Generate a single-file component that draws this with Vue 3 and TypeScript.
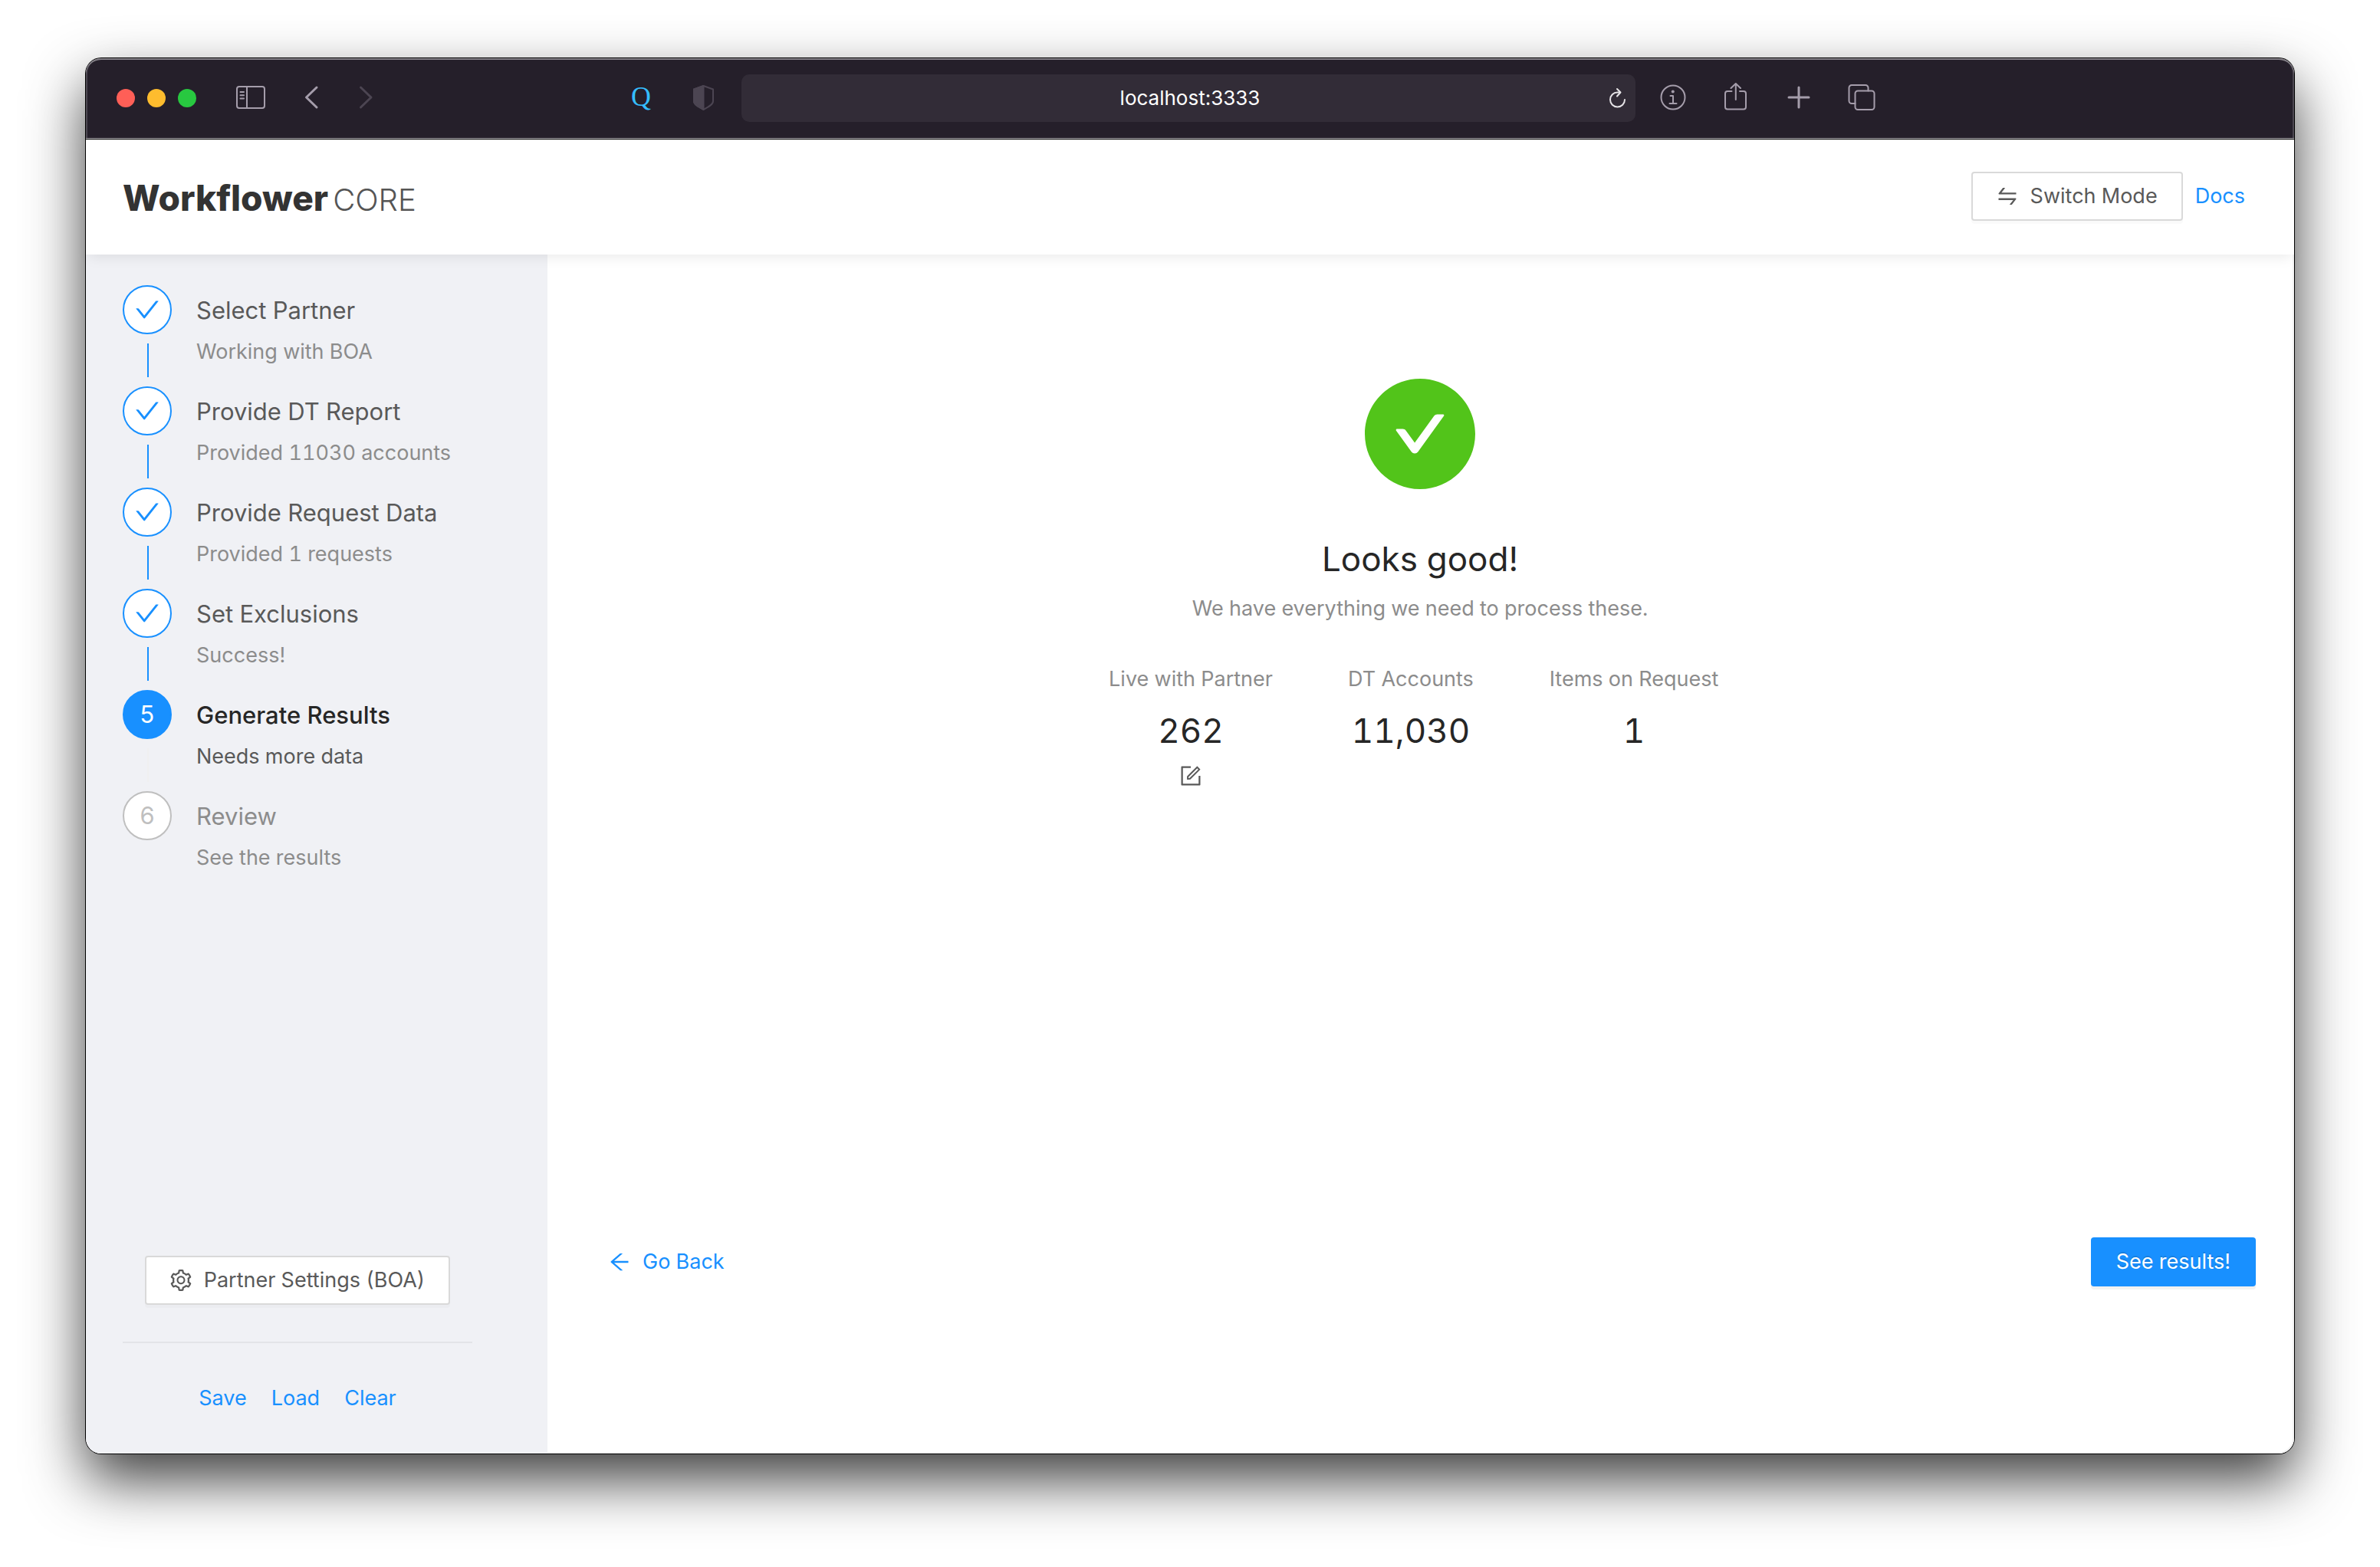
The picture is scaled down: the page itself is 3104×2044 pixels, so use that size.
<script setup lang="ts">
type StepStatus = 'done' | 'active' | 'waiting'

interface Step {
  title: string
  description: string
  status: StepStatus
}

interface Stat {
  label: string
  value: string
  editable: boolean
}

const steps: Step[] = [
  { title: 'Select Partner', description: 'Working with BOA', status: 'done' },
  { title: 'Provide DT Report', description: 'Provided 11030 accounts', status: 'done' },
  { title: 'Provide Request Data', description: 'Provided 1 requests', status: 'done' },
  { title: 'Set Exclusions', description: 'Success!', status: 'done' },
  { title: 'Generate Results', description: 'Needs more data', status: 'active' },
  { title: 'Review', description: 'See the results', status: 'waiting' },
]

const stats: Stat[] = [
  { label: 'Live with Partner', value: '262', editable: true },
  { label: 'DT Accounts', value: '11,030', editable: false },
  { label: 'Items on Request', value: '1', editable: false },
]

const sessionActions: string[] = ['Save', 'Load', 'Clear']
</script>

<template>
  <div class="desktop">
    <div class="window">
      <div class="toolbar">
        <div class="toolbar-left">
          <div class="lights">
            <button class="light close" aria-label="Close"></button>
            <button class="light minimize" aria-label="Minimize"></button>
            <button class="light zoom" aria-label="Zoom"></button>
          </div>
          <button class="tool sidebar-toggle" aria-label="Show sidebar">
            <svg viewBox="0 0 40 40">
              <rect x="2" y="5" width="36" height="28" rx="3" />
              <path d="M15 5v28" />
              <path class="thin" d="M6.5 12H11M6.5 16.300H11M6.5 20.600H11" />
            </svg>
          </button>
          <button class="tool back" aria-label="Back">
            <svg viewBox="0 0 40 40"><path class="bold" d="M27 6L13.5 19 27 32" /></svg>
          </button>
          <button class="tool forward" aria-label="Forward" disabled>
            <svg viewBox="0 0 40 40"><path class="bold" d="M12.5 6L26 19 12.5 32" /></svg>
          </button>
          <button class="tool extension" aria-label="Extension">Q</button>
          <button class="tool shield" aria-label="Privacy report">
            <svg viewBox="0 0 40 40">
              <path d="M19.5 4L32 8.500v15.500c0 4.500-7 8-12.5 11C14 32 7 28.500 7 24V8.500z" />
              <path class="solid" d="M19.5 4v31C14 32 7 28.500 7 24V8.500z" />
            </svg>
          </button>
        </div>
        <div class="address">
          <input type="text" value="localhost:3333" aria-label="Address" />
          <button class="reload" aria-label="Reload">
            <svg viewBox="0 0 24 30">
              <path d="M22 17a9.500 9.500 0 1 1-9.500-9.500H16" />
              <path d="M12 3l4.500 4.500L12 12.500" />
            </svg>
          </button>
        </div>
        <div class="toolbar-right">
          <button class="tool" aria-label="Page info">
            <svg viewBox="0 0 40 40">
              <circle cx="20" cy="19" r="15.500" />
              <circle class="dot" cx="19.800" cy="11.500" r="2" />
              <path d="M16.500 17H20v9.800M15.500 27h9" />
            </svg>
          </button>
          <button class="tool" aria-label="Share">
            <svg viewBox="0 0 40 40">
              <path d="M14.500 11H9a3 3 0 0 0-3 3v17.500a3 3 0 0 0 3 3h21a3 3 0 0 0 3-3V14a3 3 0 0 0-3-3H25" />
              <path d="M19.800 22V1M13.500 7l6.300-6L26 7" />
            </svg>
          </button>
          <button class="tool" aria-label="New tab">
            <svg viewBox="0 0 40 40"><path class="bold" d="M20 6v26M7 19h26" /></svg>
          </button>
          <button class="tool" aria-label="Tab overview">
            <svg viewBox="0 0 40 40">
              <rect x="11.500" y="10.500" width="25" height="24.500" rx="3.500" />
              <path d="M11.500 27H7a3.500 3.500 0 0 1-3.500-3.500V6.500A3.500 3.500 0 0 1 7 3h18a3.500 3.500 0 0 1 3.500 3.500v4" />
            </svg>
          </button>
        </div>
      </div>

      <header class="header">
        <h1 class="logo">Workflower<span>CORE</span></h1>
        <nav class="header-actions">
          <button class="btn">
            <svg class="icon" viewBox="64 64 896 896" aria-hidden="true"><path d="M847.9 592H152c-4.400 0-8 3.600-8 8v60c0 4.400 3.600 8 8 8h605.200L612.900 851c-4.100 5.200-.4 13 6.300 13h72.500c4.900 0 9.500-2.200 12.600-6.100l168.800-214.100c16.500-21 1.600-51.800-25.200-51.800zM872 356H266.800l144.300-183c4.100-5.200.4-13-6.300-13h-72.500c-4.900 0-9.500 2.200-12.600 6.100L150.900 380.200c-16.500 21-1.600 51.800 25.100 51.800h696c4.400 0 8-3.600 8-8v-60c0-4.400-3.600-8-8-8z" /></svg>
            Switch Mode
          </button>
          <a class="link" href="#docs">Docs</a>
        </nav>
      </header>

      <div class="body">
        <aside class="sidebar">
          <ol class="steps">
            <li v-for="(step, index) in steps" :key="step.title" class="step" :class="step.status">
              <div class="rail">
                <span class="badge">
                  <svg v-if="step.status === 'done'" viewBox="64 64 896 896" aria-hidden="true"><path d="M912 190h-69.900c-9.800 0-19.100 4.500-25.100 12.200L404.700 724.500 207 474a32 32 0 00-25.100-12.200H112c-6.700 0-10.400 7.700-6.300 12.900l273.900 347c12.800 16.200 37.400 16.200 50.300 0l488.400-618.900c4.100-5.100.4-12.800-6.300-12.800z" /></svg>
                  <template v-else>{{ index + 1 }}</template>
                </span>
                <span v-if="index < steps.length - 1" class="tail"></span>
              </div>
              <div class="step-text">
                <div class="step-title">{{ step.title }}</div>
                <div class="step-description">{{ step.description }}</div>
              </div>
            </li>
          </ol>

          <div class="sidebar-footer">
            <button class="btn">
              <svg class="icon" viewBox="64 64 896 896" aria-hidden="true"><path d="M924.800 625.700l-65.500-56c3.100-19 4.700-38.400 4.700-57.800s-1.600-38.800-4.700-57.800l65.500-56a32.030 32.030 0 009.300-35.200l-.9-2.600a443.740 443.740 0 00-79.700-137.900l-1.800-2.100a32.120 32.120 0 00-35.100-9.500l-81.300 28.900c-30-24.600-63.500-44-99.700-57.600l-15.700-85a32.050 32.050 0 00-25.800-25.700l-2.700-.5c-52.100-9.400-106.900-9.400-159 0l-2.700.5a32.050 32.050 0 00-25.800 25.700l-15.800 85.400a351.860 351.860 0 00-99 57.400l-81.900-29.100a32 32 0 00-35.100 9.500l-1.800 2.100a446.020 446.020 0 00-79.700 137.900l-.9 2.600c-4.500 12.500-.8 26.500 9.300 35.200l66.300 56.600c-3.100 18.800-4.600 38-4.600 57.100 0 19.200 1.500 38.400 4.600 57.100L99 625.500a32.030 32.030 0 00-9.300 35.200l.9 2.600c18.100 50.400 44.900 96.900 79.700 137.900l1.800 2.100a32.120 32.120 0 0035.100 9.500l81.900-29.100c29.800 24.500 63.100 43.900 99 57.400l15.800 85.400a32.050 32.050 0 0025.800 25.700l2.700.5a449.400 449.400 0 00159 0l2.700-.5a32.050 32.050 0 0025.800-25.700l15.700-85a350 350 0 0099.700-57.600l81.300 28.900a32 32 0 0035.100-9.500l1.800-2.100c34.800-41.100 61.600-87.500 79.700-137.900l.9-2.600c4.500-12.300.8-26.300-9.300-35zM788.300 465.900c2.500 15.100 3.800 30.600 3.800 46.100s-1.300 31-3.800 46.100l-6.600 40.100 74.700 63.900a370.030 370.030 0 01-42.600 73.600L721 702.800l-31.400 25.800c-23.900 19.600-50.500 35-79.300 45.800l-38.100 14.300-17.900 97a377.500 377.500 0 01-85 0l-17.900-97.200-37.800-14.500c-28.500-10.800-55-26.200-78.700-45.700l-31.400-25.900-93.400 33.200c-17-22.900-31.200-47.600-42.600-73.600l75.500-64.500-6.500-40c-2.400-14.900-3.700-30.300-3.700-45.500 0-15.300 1.200-30.600 3.700-45.500l6.500-40-75.500-64.500c11.300-26.100 25.600-50.700 42.600-73.600l93.400 33.200 31.400-25.900c23.700-19.500 50.200-34.900 78.700-45.700l37.900-14.300 17.900-97.200c28.100-3.200 56.800-3.200 85 0l17.900 97 38.100 14.300c28.700 10.800 55.400 26.200 79.300 45.800l31.400 25.800 92.800-32.900c17 22.900 31.200 47.600 42.600 73.600L781.800 426l6.500 39.900zM512 326c-97.200 0-176 78.800-176 176s78.800 176 176 176 176-78.800 176-176-78.800-176-176-176zm79.200 255.200A111.600 111.600 0 01512 614c-29.900 0-58-11.700-79.200-32.800A111.600 111.600 0 01400 502c0-29.900 11.700-58 32.800-79.200C454 401.600 482.100 390 512 390c29.900 0 58 11.600 79.200 32.800A111.600 111.600 0 01624 502c0 29.900-11.700 58-32.800 79.200z" /></svg>
              Partner Settings (BOA)
            </button>
            <hr class="divider" />
            <div class="session">
              <a v-for="action in sessionActions" :key="action" class="link" href="#">{{ action }}</a>
            </div>
          </div>
        </aside>

        <main class="main">
          <section class="result">
            <svg class="result-icon" viewBox="64 64 896 896" aria-hidden="true"><path d="M512 64C264.600 64 64 264.600 64 512s200.600 448 448 448 448-200.600 448-448S759.400 64 512 64zm193.500 301.700l-210.600 292a31.800 31.800 0 01-51.700 0L318.500 484.900c-3.800-5.300 0-12.700 6.500-12.700h46.900c10.200 0 19.900 4.900 25.900 13.300l71.200 98.800 157.200-218c6-8.300 15.600-13.300 25.900-13.300H699c6.500 0 10.300 7.400 6.500 12.700z" /></svg>
            <h2>Looks good!</h2>
            <p class="subtitle">We have everything we need to process these.</p>
            <div class="stats">
              <div v-for="stat in stats" :key="stat.label" class="stat">
                <div class="stat-label">{{ stat.label }}</div>
                <div class="stat-value">{{ stat.value }}</div>
                <button v-if="stat.editable" class="edit" :aria-label="`Edit ${stat.label}`">
                  <svg class="icon" viewBox="64 64 896 896"><path d="M904 512h-56c-4.400 0-8 3.600-8 8v320H184V184h320c4.400 0 8-3.600 8-8v-56c0-4.400-3.600-8-8-8H144c-17.700 0-32 14.300-32 32v736c0 17.700 14.300 32 32 32h736c17.700 0 32-14.300 32-32V520c0-4.400-3.600-8-8-8z" /><path d="M355.900 534.900L354 653.800c-.1 8.900 7.100 16.200 16 16.200h.4l118-2.900c2-.1 4-.9 5.400-2.300l415.900-415c3.100-3.100 3.100-8.200 0-11.300L785.400 114.300c-1.600-1.600-3.600-2.300-5.700-2.300s-4.100.8-5.700 2.300l-415.800 415a8.300 8.300 0 00-2.300 5.600zm63.500 23.600L779.700 199l45.200 45.100-360.500 359.700-45.700 1.100.7-46.400z" /></svg>
                </button>
              </div>
            </div>
          </section>
          <div class="actions">
            <button class="go-back">
              <svg class="icon" viewBox="64 64 896 896" aria-hidden="true"><path d="M872 474H286.900l350.200-304c5.600-4.900 2.200-14-5.200-14h-88.500c-3.900 0-7.600 1.400-10.500 3.900L155 487.800a31.960 31.960 0 000 48.300L535.100 866c1.500 1.300 3.300 2 5.200 2h91.500c7.400 0 10.800-9.200 5.200-14L286.900 550H872c4.400 0 8-3.600 8-8v-60c0-4.400-3.600-8-8-8z" /></svg>
              Go Back
            </button>
            <button class="primary">See results!</button>
          </div>
        </main>
      </div>
    </div>
  </div>
</template>

<style>
body {
  margin: 0;
  background: #fff;
}
</style>

<style scoped>
* {
  box-sizing: border-box;
}

button,
input {
  margin: 0;
  padding: 0;
  border: 0;
  background: none;
  font: inherit;
  color: inherit;
}

.desktop {
  display: flex;
  flex-direction: column;
  min-height: 100vh;
  padding: 76px 112px 148px;
  overflow: hidden;
  font-family: Inter, 'Liberation Sans', sans-serif;
  font-size: 27px;
  line-height: 44px;
  font-variant-numeric: tabular-nums;
  color: #262626;
}

.window {
  display: flex;
  flex: 1;
  flex-direction: column;
  border-radius: 20px;
  background: #fff;
  box-shadow: 0 0 0 1px #000, 0 34px 76px rgba(0, 0, 0, 0.76);
}

/* Browser toolbar */
.toolbar {
  display: grid;
  grid-template-columns: minmax(0, 855fr) minmax(0, 1166fr) minmax(0, 859fr);
  align-items: center;
  height: 106px;
  padding-bottom: 1px;
  border-bottom: 1px solid #000;
  border-radius: 20px 20px 0 0;
  background: #251f2a;
  box-shadow: inset 0 -1px #b0adb2, inset 0 2px #858188, inset 2px 0 #4d4852, inset -2px 0 #4d4852;
}

.toolbar-left,
.toolbar-right {
  display: flex;
  align-items: center;
}

.toolbar-left {
  padding: 0 29px 0 40px;
}

.toolbar-right {
  gap: 42px;
  padding-left: 29px;
}

.lights {
  display: flex;
  gap: 16px;
}

.light {
  width: 24px;
  height: 24px;
  border-radius: 50%;
}

.close {
  background: #ff5f57;
}

.minimize {
  background: #febc2e;
}

.zoom {
  background: #28c840;
}

.tool {
  width: 40px;
  height: 40px;
  color: #a59dab;
}

.tool svg,
.reload svg {
  display: block;
  width: 100%;
  height: 100%;
  fill: none;
  stroke: currentColor;
  stroke-width: 2;
  stroke-linecap: round;
  stroke-linejoin: round;
}

.tool svg .bold {
  stroke-width: 3;
}

.tool svg .thin {
  stroke-width: 2;
}

.tool svg .solid,
.tool svg .dot {
  fill: currentColor;
}

.tool svg .dot {
  stroke: none;
}

.sidebar-toggle {
  margin-left: 51px;
}

.back {
  margin-left: 39px;
}

.forward {
  margin-left: 32px;
  color: #4c4552;
}

.extension {
  margin-left: auto;
  font-family: 'Liberation Serif', serif;
  font-size: 36px;
  line-height: 36px;
  padding-bottom: 4px;
  color: #35bdff;
}

.shield {
  margin-left: 42px;
  color: #4c4552;
}

.address {
  display: grid;
  grid-template-columns: 40px 1fr 24px;
  align-items: center;
  height: 62px;
  padding-right: 12px;
  border-radius: 10px;
  background: #322c37;
}

.address input {
  grid-column: 2;
  width: 100%;
  height: 44px;
  font-size: 26px;
  font-variant-numeric: normal;
  text-align: center;
  color: #fff;
}

.reload {
  width: 24px;
  height: 30px;
  color: #e6e4e7;
}

/* Application header */
.header {
  display: flex;
  position: relative;
  align-items: center;
  justify-content: space-between;
  height: 150px;
  padding: 0 64px 2px 48px;
  background: #fff;
  box-shadow: 0 8px 16px -4px rgba(0, 0, 0, 0.08);
}

.logo {
  display: flex;
  align-items: baseline;
  gap: 6px;
  margin: 0;
  padding-top: 6px;
  font-size: 46px;
  font-weight: 800;
  line-height: 64px;
  color: #333;
}

.logo span {
  font-size: 40px;
  font-weight: 300;
  color: #555;
}

.header-actions {
  display: flex;
  align-items: center;
  gap: 16px;
}

.btn {
  display: flex;
  align-items: center;
  justify-content: center;
  gap: 16px;
  height: 64px;
  padding: 0 31px;
  border: 2px solid #d9d9d9;
  border-radius: 4px;
  background: #fff;
  box-shadow: 0 4px rgba(0, 0, 0, 0.02);
  white-space: nowrap;
  color: #595959;
}

.icon {
  display: block;
  flex: none;
  width: 28px;
  height: 28px;
  fill: currentColor;
}

.link {
  color: #1890ff;
  text-decoration: none;
}

.body {
  display: flex;
  flex: 1;
}

/* Steps */
.sidebar {
  display: flex;
  flex: none;
  flex-direction: column;
  width: 602px;
  padding: 40px 98px 50px 48px;
  border-bottom-left-radius: 20px;
  background: #f0f1f5;
}

.steps {
  margin: 0;
  padding: 0;
  list-style: none;
}

.step {
  display: flex;
  gap: 32px;
  min-height: 132px;
}

.rail {
  display: flex;
  flex: none;
  flex-direction: column;
  align-items: center;
  gap: 12px;
  width: 64px;
  padding-bottom: 12px;
}

.badge {
  display: flex;
  align-items: center;
  justify-content: center;
  width: 64px;
  height: 64px;
  border: 2px solid #1890ff;
  border-radius: 50%;
  background: #fff;
  font-size: 31px;
  color: #1890ff;
}

.badge svg {
  width: 32px;
  height: 32px;
  fill: currentColor;
}

.tail {
  flex: 1;
  width: 2px;
  margin-left: 2px;
  background: #1890ff;
}

.step-text {
  padding-top: 1px;
  white-space: nowrap;
}

.step-title {
  font-size: 31px;
  line-height: 64px;
  color: #595959;
}

.step-description {
  color: #8c8c8c;
}

.active .badge {
  background: #1890ff;
  color: #fff;
}

.active .tail {
  background: #f0f0f0;
}

.active .step-title {
  font-weight: 500;
  color: #262626;
}

.active .step-description {
  color: #595959;
}

.waiting .badge {
  border-color: #bfbfbf;
  color: #bfbfbf;
}

.waiting .step-title {
  color: #8c8c8c;
}

.sidebar-footer {
  display: flex;
  flex-direction: column;
  align-items: center;
  margin-top: auto;
}

.divider {
  width: 100%;
  height: 2px;
  margin: 48px 0 50px;
  border: 0;
  background: #e3e4e8;
}

.session {
  display: flex;
  gap: 32px;
}

/* Result */
.main {
  display: flex;
  flex: 1;
  flex-direction: column;
  padding: 162px 48px 216px;
  border-right: 2px solid #f2f2f2;
  border-bottom: 2px solid #f2f2f2;
  border-bottom-right-radius: 20px;
}

.result {
  display: flex;
  flex: 1;
  flex-direction: column;
  align-items: center;
}

.result-icon {
  width: 144px;
  height: 144px;
  fill: #52c41a;
}

h2 {
  margin: 48px 0 0;
  font-size: 44px;
  font-weight: 400;
  line-height: 86px;
}

.subtitle {
  margin: 0;
  color: #8c8c8c;
}

.stats {
  display: grid;
  grid-template-columns: 216px 166px 224px;
  gap: 96px;
  margin-top: 48px;
  padding-right: 16px;
}

.stat {
  display: flex;
  flex-direction: column;
  align-items: center;
  gap: 8px;
  white-space: nowrap;
}

.stat-label {
  color: #8c8c8c;
}

.stat-value {
  font-size: 44px;
  line-height: 74px;
}

.edit {
  color: #595959;
}

.actions {
  display: flex;
  align-items: center;
  justify-content: space-between;
}

.go-back {
  display: flex;
  align-items: center;
  gap: 16px;
  height: 64px;
  padding: 0 32px;
  color: #1890ff;
}

.primary {
  height: 64px;
  padding: 0 33px;
  border-radius: 4px;
  background: #1890ff;
  box-shadow: 0 4px rgba(0, 0, 0, 0.05);
  text-shadow: 0 -2px rgba(0, 0, 0, 0.12);
  color: #fff;
}
</style>
